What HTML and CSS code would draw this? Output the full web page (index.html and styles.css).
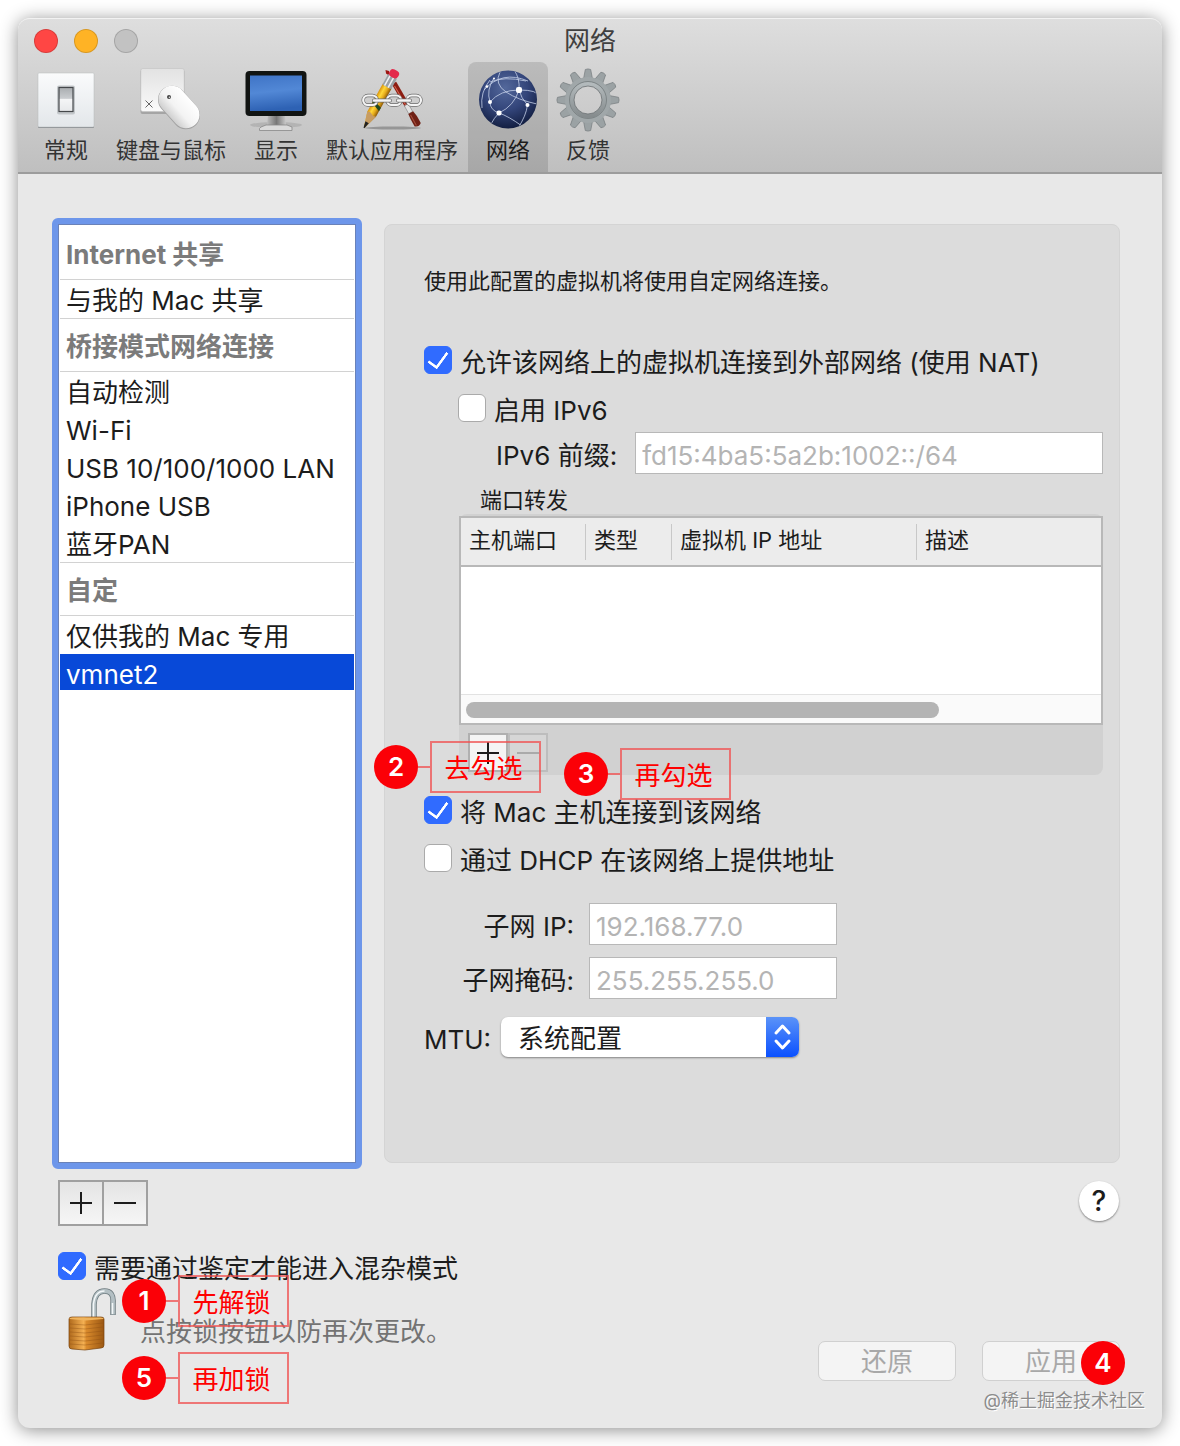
FILE: index.html
```html
<!DOCTYPE html>
<html lang="zh-CN">
<head>
    <meta charset="utf-8">
    <title>网络</title>
    <link rel="stylesheet" href="styles.css">
</head>
<body>
<div class="window">
    <header class="toolbar">
        <div class="titlebar">
            <div class="lights">
                <button class="light red" aria-label="关闭"></button>
                <button class="light yellow" aria-label="最小化"></button>
                <button class="light grey" aria-label="缩放" disabled></button>
            </div>
            <h1>网络</h1>
        </div>
        <nav class="tools">
            <button class="tool">
                <svg viewBox="0 0 64 64">
                    <defs>
                        <linearGradient id="plate" x1="0" y1="0" x2="0" y2="1"><stop offset="0" stop-color="#fafbfc"/><stop offset="1" stop-color="#e3e7ea"/></linearGradient>
                        <linearGradient id="rocker" x1="0" y1="0" x2="0" y2="1"><stop offset="0" stop-color="#a9adb0"/><stop offset=".45" stop-color="#c9cccf"/><stop offset=".5" stop-color="#f4f5f6"/><stop offset="1" stop-color="#e6e8ea"/></linearGradient>
                    </defs>
                    <rect x="4" y="6" width="56" height="54" rx="1" fill="#8b8f92"/>
                    <rect x="4" y="5" width="56" height="54" rx="1" fill="url(#plate)" stroke="#b4b8bb" stroke-width=".5"/>
                    <rect x="23" y="17.500" width="18" height="29" rx="2" fill="#c3c7ca"/>
                    <rect x="25" y="19.500" width="14" height="24" fill="url(#rocker)" stroke="#45484b" stroke-width="1.200"/>
                </svg>
                <span>常规</span>
            </button>
            <button class="tool">
                <svg viewBox="0 0 64 64">
                    <defs>
                        <linearGradient id="key" x1="0" y1="0" x2="0" y2="1"><stop offset="0" stop-color="#e2e2e2"/><stop offset="1" stop-color="#fafafa"/></linearGradient>
                        <linearGradient id="mouse" x1="0" y1="0" x2="0" y2="1"><stop offset="0" stop-color="#fff"/><stop offset=".6" stop-color="#f3f3f3"/><stop offset="1" stop-color="#cfcfcf"/></linearGradient>
                    </defs>
                    <rect x="1.500" y="1.500" width="44" height="44.500" rx="2" fill="#a5a5a5"/>
                    <rect x="1.800" y=".5" width="43.400" height="43" rx="2" fill="url(#key)" stroke="#c2c2c2" stroke-width=".6"/>
                    <path d="M6.500 32.500l7 7m0-7l-7 7" stroke="#666" stroke-width="1"/>
                    <rect x="15.500" y="25.500" width="49" height="28" rx="14" transform="rotate(48 40 39.500)" fill="#a2a2a2"/>
                    <rect x="16" y="25.500" width="48" height="27" rx="13.500" transform="rotate(48 40 39)" fill="url(#mouse)"/>
                    <circle cx="30" cy="29" r="2" fill="#444"/><circle cx="30.400" cy="29.300" r=".8" fill="#ddd"/>
                </svg>
                <span>键盘与鼠标</span>
            </button>
            <button class="tool">
                <svg viewBox="0 0 64 64">
                    <defs>
                        <linearGradient id="screen" x1="0" y1="0" x2=".15" y2="1"><stop offset="0" stop-color="#3f74c6"/><stop offset=".5" stop-color="#5288d6"/><stop offset="1" stop-color="#2e62b4"/></linearGradient>
                        <linearGradient id="stand" x1="0" y1="0" x2="1" y2="0"><stop offset="0" stop-color="#bdbdbd"/><stop offset=".5" stop-color="#777"/><stop offset="1" stop-color="#c9c9c9"/></linearGradient>
                    </defs>
                    <ellipse cx="32" cy="57" rx="26" ry="3" fill="#000" opacity=".1"/>
                    <path d="M24 47h17l1 10H23z" fill="url(#stand)"/>
                    <path d="M17 59l5-2h21l5 2v3.500H15.500v-2z" fill="#dadada" stroke="#888" stroke-width=".8"/>
                    <rect x="1.500" y="3" width="61" height="45" rx="4" fill="#111412"/>
                    <rect x="6" y="7.500" width="52" height="35.500" fill="url(#screen)"/>
                </svg>
                <span>显示</span>
            </button>
            <button class="tool">
                <svg viewBox="0 0 64 64">
                    <defs>
                        <linearGradient id="pencil" x1="0" y1="0" x2="1" y2="0"><stop offset="0" stop-color="#d9930c"/><stop offset=".35" stop-color="#ffd83a"/><stop offset=".65" stop-color="#e8ae1c"/><stop offset="1" stop-color="#8f5a08"/></linearGradient>
                    </defs>
                    <ellipse cx="33" cy="60" rx="28" ry="1.500" fill="#000" opacity=".25"/>
                    <path d="M25.500 2l3.500 1v4.500l-3-2z" fill="#9c1712"/>
                    <g transform="translate(34 15) rotate(-29)">
                        <path d="M-2.500 0h5l.5 26h-5z" fill="#8c1d12"/>
                        <path d="M-1 3l.5 22" stroke="#d8644e" stroke-width="1"/>
                        <rect x="-2" y="25" width="4.500" height="9" fill="#e2e2e2" stroke="#777" stroke-width=".5"/>
                        <path d="M-2.500 34h5.500l1 6v8q-3.500 3-7 0v-8z" fill="#6f2015"/>
                        <path d="M-1 36v12" stroke="#a8503e" stroke-width="1"/>
                    </g>
                    <g transform="translate(35 4) rotate(29)">
                        <path d="M-5 16H5v32L.6 63h-1.200L-5 48z" fill="url(#pencil)"/>
                        <path d="M-5 48q2.500-2 5 0t5 0L.6 63h-1.200z" fill="#c79c62"/>
                        <path d="M-1.900 57.500h3.800L.5 64h-1z" fill="#222"/>
                        <path d="M-5 35l10 3v4l-10-4z" fill="#20481f"/>
                        <rect x="-5" y="5" width="10" height="12" fill="#9aa1a6"/>
                        <path d="M-2.500 5v12M1.500 5v12" stroke="#eef1f3" stroke-width="1.500"/>
                        <rect x="-5" y="-2" width="10" height="8" rx="3.500" fill="#e3294b"/>
                    </g>
                    <g fill="none" stroke="#6c6c6c" stroke-width="3.400">
                        <rect x="3.200" y="27.500" width="14" height="9.500" rx="4.700"/><rect x="27" y="27.500" width="14" height="9.500" rx="4.700"/><rect x="47" y="27.500" width="14" height="9.500" rx="4.700"/>
                    </g>
                    <g fill="none" stroke="#f4f4f4" stroke-width="2.200">
                        <rect x="3.200" y="27.500" width="14" height="9.500" rx="4.700"/><rect x="27" y="27.500" width="14" height="9.500" rx="4.700"/><rect x="47" y="27.500" width="14" height="9.500" rx="4.700"/>
                    </g>
                    <path d="M14 32.500h16M38 32.500h12" stroke="#6c6c6c" stroke-width="3.800" stroke-linecap="round"/>
                    <path d="M14 32.500h16M38 32.500h12" stroke="#f4f4f4" stroke-width="2.400" stroke-linecap="round"/>
                </svg>
                <span>默认应用程序</span>
            </button>
            <button class="tool selected" aria-current="page">
                <svg viewBox="0 0 64 64">
                    <defs>
                        <radialGradient id="globe" cx=".45" cy=".3" r=".7"><stop offset="0" stop-color="#53689b"/><stop offset=".55" stop-color="#33457a"/><stop offset="1" stop-color="#131f42"/></radialGradient>
                        <clipPath id="ball"><circle cx="32" cy="31.500" r="28.500"/></clipPath>
                    </defs>
                    <circle cx="32" cy="31.500" r="29" fill="url(#globe)"/>
                    <g clip-path="url(#ball)" fill="none" stroke="#c7d2ea" stroke-width=".8">
                        <path d="M14 34Q24 22 43 22T62 28M24 4Q18 16 30 24T61 36M23 45Q38 38 43 22M43 22Q44 10 38 2M43 22Q45 30 51.500 37M51.500 37Q50 48 42 60M14 34Q14 42 23 45T46 58M23 45Q18 50 15 56M14 34Q10 22 18 10M6 40Q4 24 14 12M14 14Q28 8 50 13M8 22Q26 2 52 13"/>
                    </g>
                    <g fill="#fff">
                        <rect x="40" y="19" width="6" height="6" rx="2"/>
                        <rect x="20.500" y="42.500" width="5" height="5" rx="2"/>
                        <circle cx="14" cy="34" r="2"/><circle cx="51.500" cy="37" r="2"/><circle cx="11" cy="18.500" r="1.300"/><circle cx="18" cy="10.500" r="1"/>
                    </g>
                </svg>
                <span>网络</span>
            </button>
            <button class="tool">
                <svg viewBox="0 0 64 64">
                    <defs>
                        <linearGradient id="metal" x1="0" y1="0" x2="0" y2="1"><stop offset="0" stop-color="#b3babc"/><stop offset="1" stop-color="#868c8e"/></linearGradient>
                        <g id="teeth">
                            <path id="tooth" d="M27.500 11l1.800-9.500q2.700-1.200 5.400 0l1.800 9.500z"/>
                            <use href="#tooth" transform="rotate(30 32 32)"/>
                            <use href="#tooth" transform="rotate(60 32 32)"/>
                        </g>
                    </defs>
                    <g fill="#9ba2a4" stroke="#777d7f" stroke-width=".7">
                        <use href="#teeth"/>
                        <use href="#teeth" transform="rotate(90 32 32)"/>
                        <use href="#teeth" transform="rotate(180 32 32)"/>
                        <use href="#teeth" transform="rotate(270 32 32)"/>
                    </g>
                    <circle cx="32" cy="32" r="18.500" fill="none" stroke="#a0a7a9" stroke-width="9"/>
                    <circle cx="32" cy="32" r="16" fill="none" stroke="url(#metal)" stroke-width="4"/>
                    <circle cx="32" cy="32" r="18.500" fill="none" stroke="#6f7577" stroke-width=".7"/>
                    <circle cx="32" cy="32" r="14" fill="none" stroke="#6c7173" stroke-width=".8"/>
                </svg>
                <span>反馈</span>
            </button>
        </nav>
    </header>

    <main class="content">
        <div class="columns">
            <aside class="networks">
                <h2>Internet 共享</h2>
                <ul>
                    <li><button>与我的 Mac 共享</button></li>
                </ul>
                <h2>桥接模式网络连接</h2>
                <ul>
                    <li><button>自动检测</button></li>
                    <li><button>Wi-Fi</button></li>
                    <li><button>USB 10/100/1000 LAN</button></li>
                    <li><button>iPhone USB</button></li>
                    <li><button>蓝牙PAN</button></li>
                </ul>
                <h2>自定</h2>
                <ul>
                    <li><button>仅供我的 Mac 专用</button></li>
                    <li><button class="active">vmnet2</button></li>
                </ul>
            </aside>

            <section class="panel">
                <p class="intro">使用此配置的虚拟机将使用自定网络连接。</p>
                <label class="check nat"><input type="checkbox" checked><span>允许该网络上的虚拟机连接到外部网络 (使用 NAT)</span></label>
                <label class="check ipv6"><input type="checkbox"><span>启用 IPv6</span></label>
                <div class="field prefix">
                    <label for="prefix">IPv6 前缀:</label>
                    <input type="text" id="prefix" value="fd15:4ba5:5a2b:1002::/64" disabled>
                </div>

                <h3>端口转发</h3>
                <div class="forwarding">
                    <div class="table-box">
                        <table>
                            <thead>
                                <tr>
                                    <th class="port">主机端口</th>
                                    <th class="type">类型</th>
                                    <th class="address">虚拟机 IP 地址</th>
                                    <th>描述</th>
                                </tr>
                            </thead>
                            <tbody></tbody>
                        </table>
                        <div class="scroll"><div class="thumb"></div></div>
                    </div>
                    <div class="small-buttons">
                        <button aria-label="添加端口"><svg viewBox="0 0 22 22"><path d="M11 0v22M0 11h22"/></svg></button>
                        <button aria-label="移除端口" disabled><svg viewBox="0 0 22 22"><path d="M0 11h22"/></svg></button>
                    </div>
                    <div class="callout step2"><b>2</b><span>去勾选</span></div>
                    <div class="callout step3"><b>3</b><span>再勾选</span></div>
                </div>

                <label class="check host"><input type="checkbox" checked><span>将 Mac 主机连接到该网络</span></label>
                <label class="check dhcp"><input type="checkbox"><span>通过 DHCP 在该网络上提供地址</span></label>

                <div class="subnet">
                    <label for="ip">子网 IP:</label>
                    <input type="text" id="ip" value="192.168.77.0" disabled>
                    <label for="mask">子网掩码:</label>
                    <input type="text" id="mask" value="255.255.255.0" disabled>
                </div>
                <div class="field mtu">
                    <label for="mtu">MTU:</label>
                    <div class="select">
                        <select id="mtu">
                            <option>系统配置</option>
                        </select>
                        <svg viewBox="0 0 33 40"><path d="M10 16l6.500-7 6.500 7M10 24l6.500 7 6.500-7"/></svg>
                    </div>
                </div>
            </section>
        </div>

        <div class="below">
            <div class="list-buttons">
                <button aria-label="添加网络"><svg viewBox="0 0 22 22"><path d="M11 0v22M0 11h22"/></svg></button>
                <button aria-label="移除网络"><svg viewBox="0 0 22 22"><path d="M0 11h22"/></svg></button>
            </div>
            <button class="help">?</button>
        </div>

        <footer>
            <label class="check"><input type="checkbox" checked><span>需要通过鉴定才能进入混杂模式</span></label>
            <div class="lock">
                <button aria-label="锁">
                    <svg viewBox="0 0 48 64">
                        <defs>
                            <linearGradient id="wood" x1="0" y1="0" x2="1" y2="0"><stop offset="0" stop-color="#b06a1c"/><stop offset=".42" stop-color="#f4b052"/><stop offset=".5" stop-color="#d98a2c"/><stop offset="1" stop-color="#9c5812"/></linearGradient>
                        </defs>
                        <path d="M26 32V16Q27 3 36.500 3T45 15v12" fill="none" stroke="#6f7c80" stroke-width="5.500"/>
                        <path d="M26 32V16Q27 3 36.500 3T45 15v11.500" fill="none" stroke="#b3bfc3" stroke-width="3.800"/>
                        <path d="M25.500 30V16Q27 3 36.500 3M44.500 15v11" fill="none" stroke="#f3f7f8" stroke-width="1.500"/>
                        <path d="M1 31q0-2 3-2h29q3 0 3 2v26q0 3-3 3l-16 2-13-1q-3 0-3-3z" fill="url(#wood)" stroke="#75400c" stroke-width=".7"/>
                        <path d="M1.500 31q0-1.500 3-1.500h28q3 0 3 1.500l-18 1.500z" fill="#f0b45e"/>
                        <path d="M2 36l15 1 18-2M2 40l15 1 18-2M2 44l15 1 18-2M2 48l15 1 18-2M2 52l15 1 18-2M2 56l15 1 18-2" fill="none" stroke="#8e4f13" stroke-width=".8" opacity=".5"/>
                    </svg>
                </button>
                <span>点按锁按钮以防再次更改。</span>
            </div>
            <div class="callout step1"><b>1</b><span>先解锁</span></div>
            <div class="callout step5"><b>5</b><span>再加锁</span></div>
            <div class="actions">
                <button disabled>还原</button>
                <button disabled>应用</button>
                <div class="callout step4"><b>4</b></div>
            </div>
            <p class="credit">@稀土掘金技术社区</p>
        </footer>
    </main>
</div>
</body>
</html>
```
FILE: styles.css
```css
* {
    box-sizing: border-box;
}

body {
    margin: 0;
    padding: 18px;
    min-height: 100vh;
    display: flex;
    background-color: #fff;
    color: #1c1c1c;
    font-family: Inter, "Noto Sans CJK SC", sans-serif;
    font-size: 26px;
    line-height: 28px;
}

button, input, select {
    font: inherit;
    color: inherit;
    margin: 0;
    padding: 0;
    border: none;
    background: none;
}

h1, h2, h3, p, ul {
    margin: 0;
    padding: 0;
    font-size: 26px;
    font-weight: normal;
}

.window {
    flex: 1;
    display: flex;
    flex-direction: column;
    border-radius: 12px;
    background-color: #e8e8e8;
    box-shadow: 0 2px 18px rgba(0, 0, 0, 0.45);
}

/* toolbar */
.toolbar {
    border-radius: 12px 12px 0 0;
    border-top: 1px solid #f2f2f2;
    border-bottom: 2px solid #9c9c9c;
    background: linear-gradient(#dedede, #bfbfbf);
}

.titlebar {
    height: 43px;
    display: grid;
    grid-template-columns: 1fr auto 1fr;
    align-items: center;
}

.titlebar h1 {
    color: #404040;
}

.lights {
    display: flex;
    gap: 16px;
    padding-left: 16px;
}

.light {
    width: 24px;
    height: 24px;
    border-radius: 50%;
    border: 1px solid rgba(0, 0, 0, 0.15);
}

.red {
    background-color: #ff4644;
}

.yellow {
    background-color: #ffb325;
}

.grey {
    background-color: #c2c2c2;
}

.tools {
    display: flex;
    padding-left: 8px;
}

.tool {
    min-width: 80px;
    height: 110px;
    padding: 6px 8px 0;
    display: flex;
    flex-direction: column;
    align-items: center;
    gap: 4px;
    font-size: 22px;
    color: #333;
    white-space: nowrap;
}

.tool svg {
    width: 64px;
    height: 64px;
}

.tool span {
    padding: 0 2px;
}

.tool.selected {
    border-radius: 8px 8px 0 0;
    background-color: rgba(0, 0, 0, 0.12);
    color: #1c1c1c;
}

/* main area */
.content {
    flex: 1;
    display: flex;
    flex-direction: column;
    padding: 44px 42px 0 34px;
}

.columns {
    display: flex;
    gap: 22px;
}

.networks {
    width: 310px;
    flex-shrink: 0;
    border: 6px solid #6d96ea;
    border-radius: 6px;
    background-color: #fff;
    box-shadow: inset 0 0 0 1px #6a82b8;
    padding: 2px;
}

.networks h2 {
    height: 54px;
    padding: 14px 6px 0;
    border-top: 1px solid #d2d2d2;
    border-bottom: 1px solid #d2d2d2;
    font-weight: bold;
    color: #7b7b7b;
}

.networks h2:first-child {
    border-top-color: transparent;
}

.networks ul {
    list-style: none;
}

.networks li button {
    display: block;
    width: 100%;
    height: 36px;
    margin-bottom: 2px;
    padding: 7px 6px 1px;
    text-align: left;
    white-space: nowrap;
}

.networks li .active {
    background-color: #0849d8;
    color: #fff;
}

.panel {
    flex: 1;
    min-width: 0;
    margin: 6px 0;
    padding: 42px 16px 105px 39px;
    border: 1px solid #d4d4d4;
    border-radius: 8px;
    background-color: #dcdcdc;
}

.intro {
    font-size: 22px;
}

.check {
    display: flex;
    gap: 8px;
    width: fit-content;
    height: 28px;
}

.check span {
    padding-top: 3px;
    white-space: nowrap;
}

.check input {
    appearance: none;
    flex-shrink: 0;
    width: 28px;
    height: 28px;
    border: 1px solid #aaa;
    border-radius: 6px;
    background-color: #fff;
}

.check input:checked {
    border-color: #306bff;
    background-color: #306bff;
}

.check input:checked::after {
    content: "";
    display: block;
    width: 9px;
    height: 17px;
    margin: 2px 8px;
    border: solid #fff;
    border-width: 0 3px 3px 0;
    border-radius: 1px;
    transform: translate(-1px, -1px) rotate(36deg);
}

.nat {
    margin-top: 51px;
}

.ipv6 {
    margin: 20px 0 10px 34px;
}

.field {
    display: flex;
    align-items: center;
}

.field label, .subnet label {
    padding-top: 5px;
}

.prefix {
    gap: 18px;
    margin-left: 72px;
}

.prefix input {
    flex: 1;
    min-width: 0;
}

input[type="text"] {
    height: 42px;
    padding: 4px 6px 0;
    border: 1px solid #b8b8b8;
    background-color: #fff;
    color: #b4b4b4;
}

.panel h3 {
    margin: 12px 0 0 56px;
    font-size: 22px;
}

.forwarding {
    position: relative;
    margin-left: 35px;
    padding: 2px 0 3px;
    border-radius: 8px;
    background-color: #d1d1d1;
}

.table-box {
    border: 2px solid #b8b8b8;
    background-color: #fff;
}

table {
    width: 100%;
    height: 176px;
    border-collapse: collapse;
    table-layout: fixed;
    font-size: 22px;
}

thead tr {
    height: 48px;
    background-color: #ececec;
    border-bottom: 2px solid #b8b8b8;
}

th {
    padding: 0 8px 4px;
    font-weight: normal;
    text-align: left;
    background: linear-gradient(#c8c8c8, #c8c8c8) no-repeat right center / 1px 36px;
}

th:last-child {
    background: none;
}

.port {
    width: 125px;
}

.type {
    width: 86px;
}

.address {
    width: 245px;
}

.scroll {
    height: 29px;
    padding: 7px 5px;
    border-top: 1px solid #e2e2e2;
    background-color: #fafafa;
}

.thumb {
    width: 75%;
    height: 16px;
    border-radius: 8px;
    background-color: #b4b4b4;
}

.small-buttons {
    display: flex;
    padding: 8px 9px 0;
}

.small-buttons button {
    width: 40px;
    height: 39px;
    padding: 7px;
    border: 2px solid #b0b0b0;
    background-color: #f4f4f4;
}

.small-buttons button:disabled {
    border-color: #bdbdbd;
    background-color: #d6d6d6;
    color: #aaa;
}

.small-buttons svg, .list-buttons svg {
    display: block;
    width: 22px;
    height: 22px;
    fill: none;
    stroke: currentColor;
    stroke-width: 2;
}

.host {
    margin-top: 21px;
}

.dhcp {
    margin-top: 20px;
}

.subnet {
    display: grid;
    grid-template-columns: 150px 248px;
    gap: 12px 15px;
    align-items: center;
    margin-top: 31px;
}

.subnet input {
    width: 100%;
}

.subnet label {
    text-align: right;
}

.mtu {
    gap: 10px;
    margin-top: 18px;
}

.select {
    position: relative;
    width: 298px;
}

.select select {
    appearance: none;
    display: block;
    width: 100%;
    height: 40px;
    padding: 4px 40px 0 17px;
    border-radius: 7px;
    background-color: #fff;
    box-shadow: 0 1px 2px rgba(0, 0, 0, 0.4);
}

.select svg {
    position: absolute;
    top: 0;
    right: 0;
    width: 33px;
    height: 40px;
    border-radius: 0 7px 7px 0;
    background: linear-gradient(#5b93f8, #0a50ff);
    fill: none;
    stroke: #fff;
    stroke-width: 3;
    stroke-linecap: round;
    stroke-linejoin: round;
    pointer-events: none;
}

/* below the columns */
.below {
    display: flex;
    justify-content: space-between;
    align-items: flex-start;
    margin-top: 11px;
    padding-left: 6px;
}

.list-buttons {
    display: flex;
}

.list-buttons button {
    width: 46px;
    height: 46px;
    padding: 10px;
    border: 2px solid #a0a0a0;
    background: linear-gradient(#e4e4e4, #f6f6f6);
}

.list-buttons button + button {
    margin-left: -2px;
}

.help {
    width: 40px;
    height: 40px;
    margin: 1px 1px 0 0;
    border-radius: 50%;
    background-color: #fff;
    box-shadow: 0 1px 2px rgba(0, 0, 0, 0.45);
    font-size: 28px;
    font-weight: 500;
}

footer {
    position: relative;
    flex: 1;
    padding: 26px 0 0 6px;
}

.lock {
    display: flex;
    gap: 24px;
    margin: 8px 0 0 10px;
    color: #737373;
}

.lock svg {
    display: block;
    width: 48px;
    height: 64px;
}

.lock span {
    padding-top: 30px;
}

.actions {
    position: relative;
    display: flex;
    justify-content: flex-end;
    gap: 26px;
    margin-top: -11px;
}

.actions button {
    width: 138px;
    height: 40px;
    padding-top: 2px;
    border: 1px solid #d0d0d0;
    border-radius: 7px;
    background-color: #f4f4f4;
    color: #a8a8a8;
}

.credit {
    margin: 6px -25px 0 0;
    text-align: right;
    font-size: 18px;
    color: #8c8c8c;
    text-shadow: 1px 1px 0 #fff;
}

/* numbered callouts lying over the controls */
.callout {
    position: absolute;
    display: flex;
    align-items: center;
    color: #ff0000;
    white-space: nowrap;
}

.callout b {
    width: 44px;
    height: 44px;
    border-radius: 50%;
    background-color: #fb0007;
    color: #fff;
    font-weight: 600;
    line-height: 44px;
    text-align: center;
}

.callout span {
    position: relative;
    width: 111px;
    height: 52px;
    margin-left: 12px;
    padding: 12px 4px 0 0;
    border: 2px solid rgba(240, 80, 80, 0.75);
    text-align: center;
}

.callout span::before {
    content: "";
    position: absolute;
    top: 23px;
    left: -14px;
    width: 12px;
    height: 2px;
    background-color: rgba(240, 80, 80, 0.75);
}

.step2 {
    left: -85px;
    top: 227px;
}

.step3 {
    left: 105px;
    top: 234px;
}

.step1 {
    left: 70px;
    top: 49px;
}

.step5 {
    left: 70px;
    top: 126px;
}

.step4 {
    right: -5px;
    top: 0;
}
```
